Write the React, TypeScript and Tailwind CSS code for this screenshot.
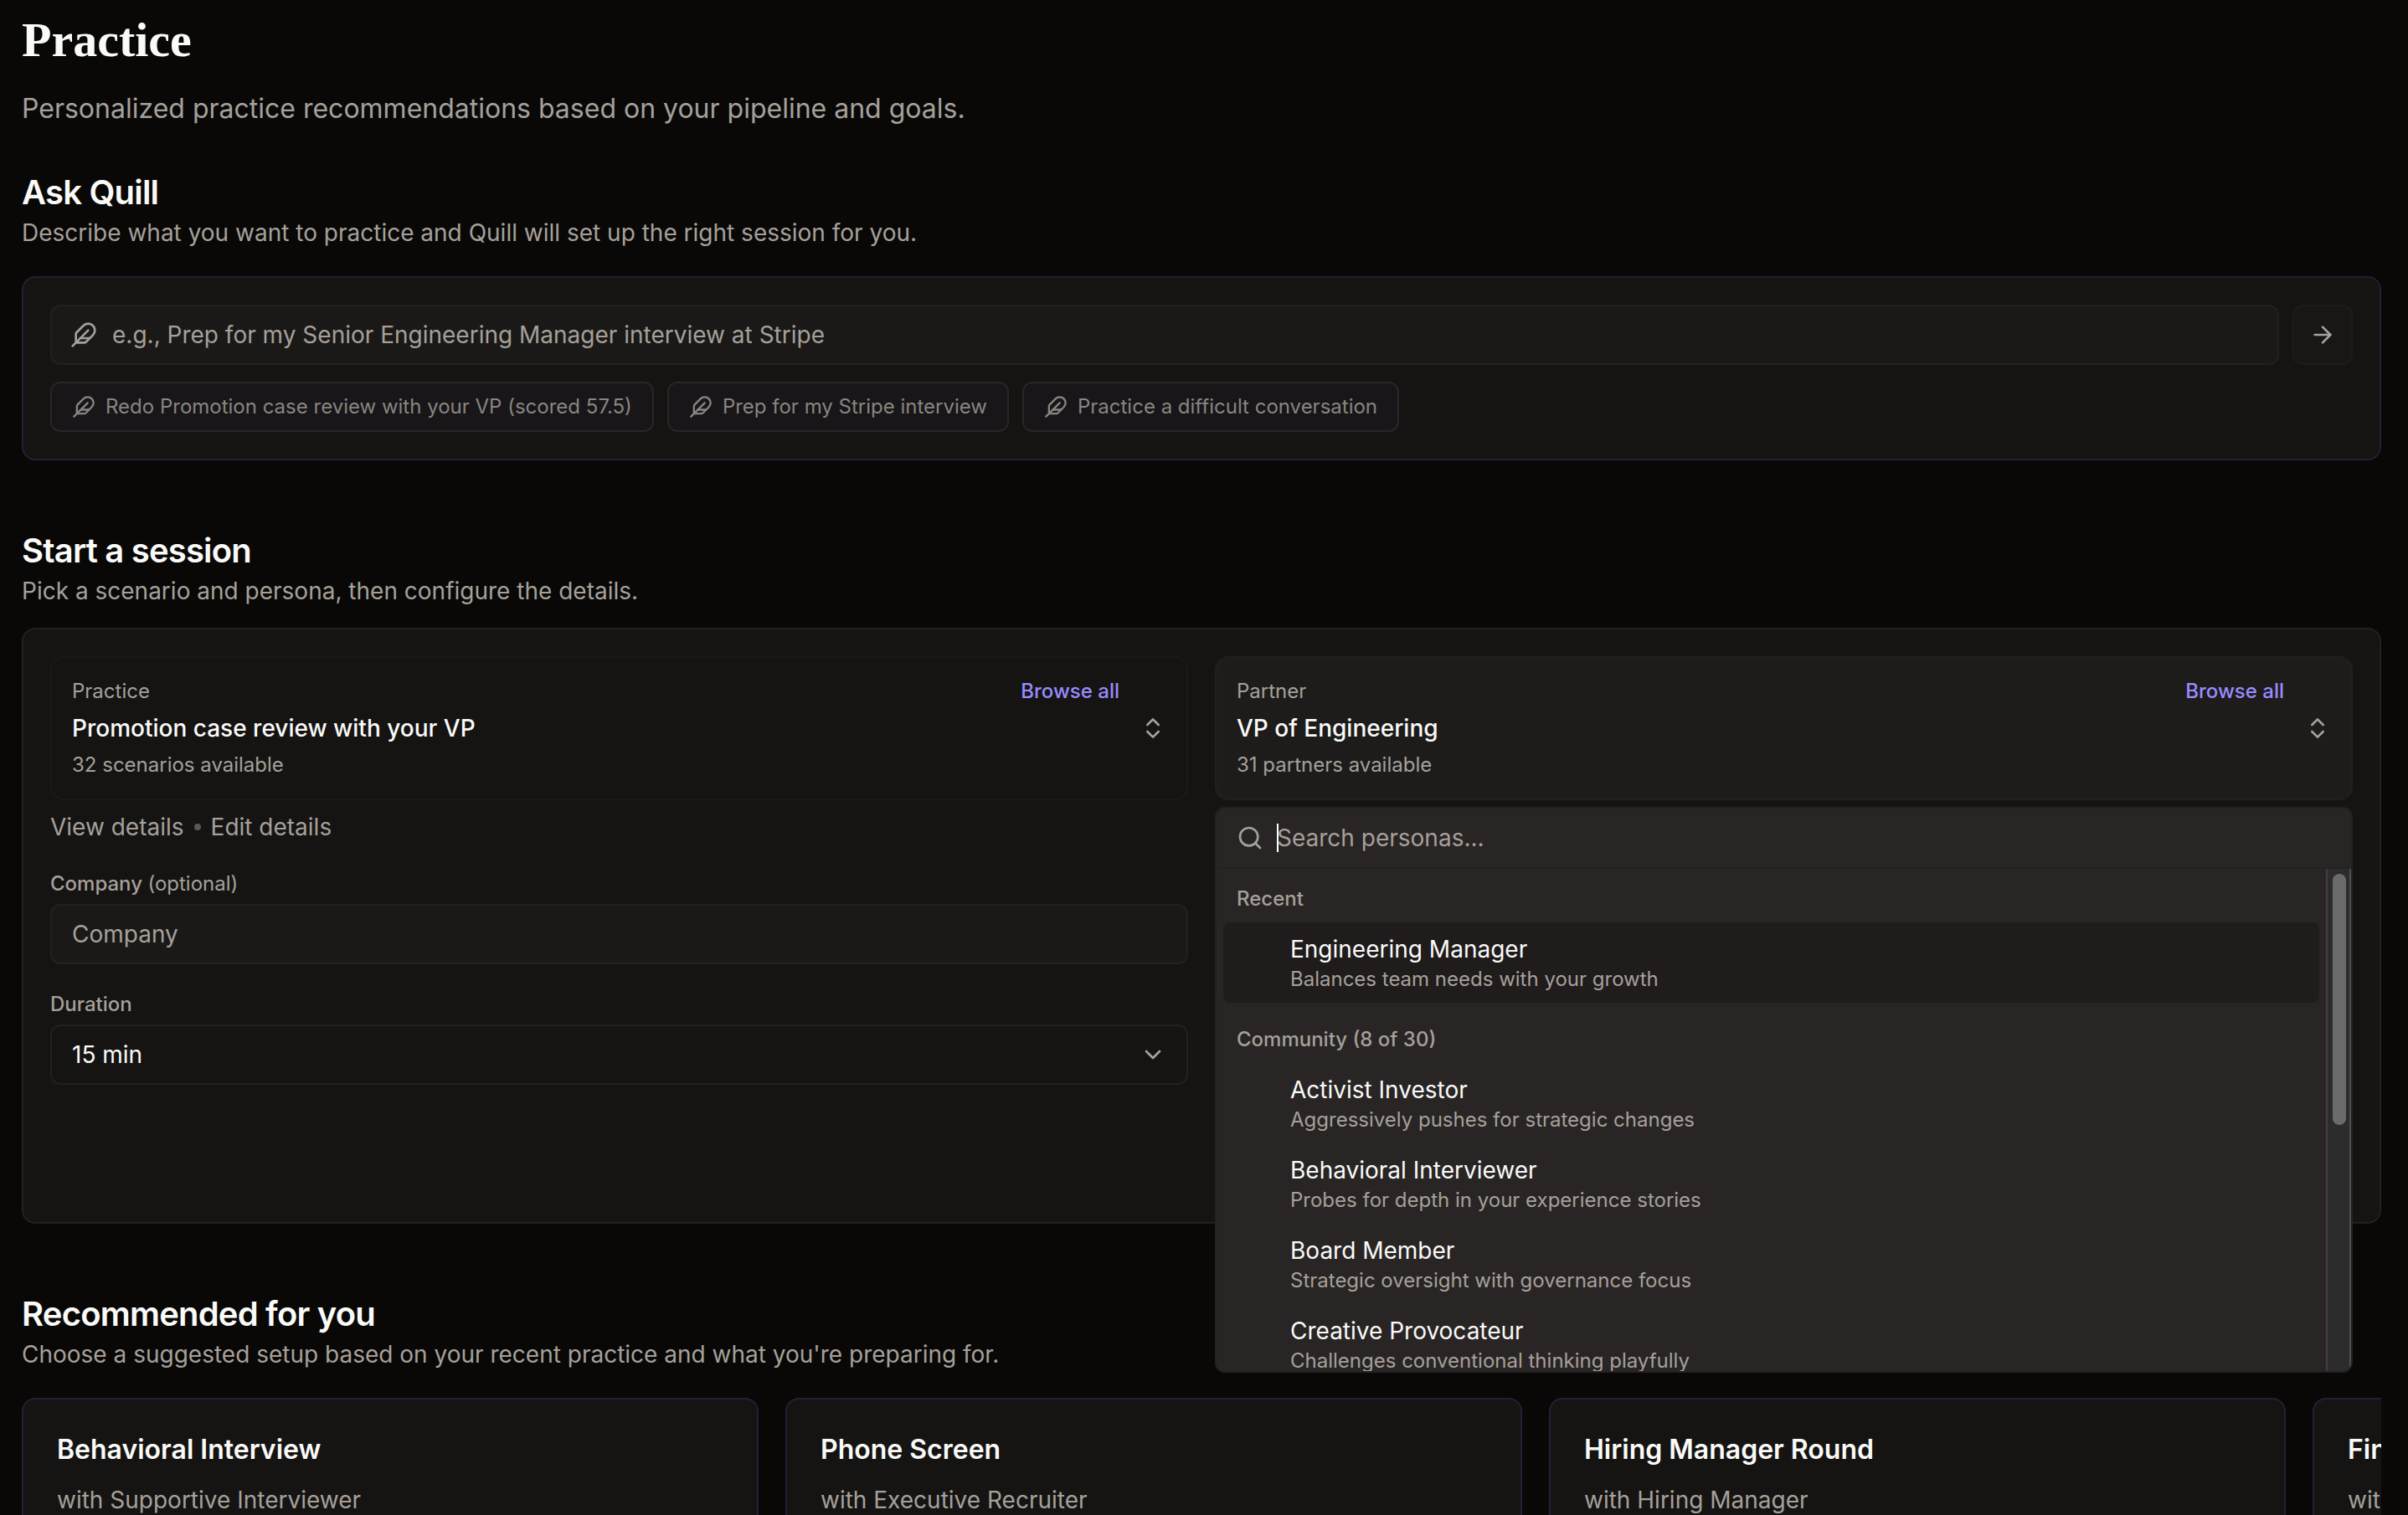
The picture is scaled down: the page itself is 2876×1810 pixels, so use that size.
import { ArrowRight, ChevronDown, ChevronsUpDown, Feather, Search } from "lucide-react";

const suggestions = [
  "Redo Promotion case review with your VP (scored 57.5)",
  "Prep for my Stripe interview",
  "Practice a difficult conversation",
];

const personaGroups = [
  {
    label: "Recent",
    items: [
      { name: "Engineering Manager", description: "Balances team needs with your growth", active: true },
    ],
  },
  {
    label: "Community (8 of 30)",
    items: [
      { name: "Activist Investor", description: "Aggressively pushes for strategic changes", active: false },
      { name: "Behavioral Interviewer", description: "Probes for depth in your experience stories", active: false },
      { name: "Board Member", description: "Strategic oversight with governance focus", active: false },
      { name: "Creative Provocateur", description: "Challenges conventional thinking playfully", active: false },
    ],
  },
];

const recommendations = [
  { title: "Behavioral Interview", persona: "with Supportive Interviewer" },
  { title: "Phone Screen", persona: "with Executive Recruiter" },
  { title: "Hiring Manager Round", persona: "with Hiring Manager" },
  { title: "Final Round", persona: "with Hiring Manager" },
];

const SectionHeading = ({ title, description }: { title: string; description: string }) => (
  <div>
    <h2 className="text-[40px] leading-[56px] font-semibold tracking-[-0.02em] text-stone-50">{title}</h2>
    <p className="text-[28px] leading-10 text-stone-400">{description}</p>
  </div>
);

type PickerProps = {
  label: string;
  value: string;
  hint: string;
  open?: boolean;
};

const Picker = ({ label, value, hint, open = false }: PickerProps) => (
  <div
    className={`flex items-center gap-6 rounded-2xl border-2 p-6 ${
      open ? "border-[#20201e] bg-[#1d1c1a]" : "border-[#1b1a18]"
    }`}
  >
    <div className="min-w-0 flex-1">
      <div className="flex items-center justify-between text-2xl leading-8">
        <span className="text-stone-400">{label}</span>
        <a href="#browse" className="font-medium text-[#988cff]">
          Browse all
        </a>
      </div>
      <p className="mt-2 truncate text-[28px] leading-10 font-medium text-stone-50">{value}</p>
      <p className="mt-2 text-2xl leading-8 text-stone-400">{hint}</p>
    </div>
    <button type="button" aria-label={`Change ${label}`} aria-expanded={open}>
      <ChevronsUpDown className="size-8 text-stone-400" />
    </button>
  </div>
);

const PersonaMenu = () => (
  <div className="absolute inset-x-0 top-full z-10 mt-2 overflow-hidden rounded-xl border-2 border-[#232220] bg-[#292524]">
    <div className="flex h-[72px] items-center gap-4 border-b-2 border-[#232220] px-6">
      <Search className="size-8 shrink-0 text-[#a3a19e]" />
      <div className="relative flex flex-1 items-center">
        <input
          type="text"
          aria-label="Search personas"
          placeholder="Search personas..."
          className="w-full bg-transparent text-[28px] leading-10 text-stone-50 caret-transparent outline-none placeholder:text-stone-400"
        />
        <span className="absolute left-0 h-[34px] w-0.5 bg-white" />
      </div>
    </div>

    <div className="flex h-[600px]">
      <div className="min-w-0 flex-1 overflow-hidden">
        {personaGroups.map((group) => (
          <div key={group.label} className="p-2">
            <p className="px-4 py-3 text-2xl leading-8 font-medium text-stone-400">{group.label}</p>
            {group.items.map((item) => (
              <button
                key={item.name}
                type="button"
                className={`block w-full rounded-lg py-3 pr-4 pl-20 text-left ${item.active ? "bg-[#1f1c1b]" : ""}`}
              >
                <span className="block text-[28px] leading-10 text-stone-50">{item.name}</span>
                <span className="block text-2xl leading-8 text-stone-400">{item.description}</span>
              </button>
            ))}
          </div>
        ))}
      </div>

      {/* scrollbar */}
      <div className="w-[30px] shrink-0 border-r-2 border-l-2 border-r-[#4f4f4f] border-l-[#3e3e3e] bg-[#2c2c2c] pt-1.5 pr-1 pl-1.5">
        <div className="h-[300px] w-4 rounded-full bg-[#6b6b6b]" />
      </div>
    </div>
  </div>
);

export default function App() {
  return (
    <main className="h-screen overflow-hidden bg-[#090806] pt-4 pr-8 pl-[26px] font-['Inter',sans-serif] text-stone-50">
      <header>
        <h1 className="font-['Liberation_Serif',serif] text-[58px] leading-[64px] font-bold">Practice</h1>
        <p className="mt-[26px] text-[32px] leading-[48px] text-stone-400">
          Personalized practice recommendations based on your pipeline and goals.
        </p>
      </header>

      <section className="mt-12">
        <SectionHeading
          title="Ask Quill"
          description="Describe what you want to practice and Quill will set up the right session for you."
        />
        <div className="mt-8 rounded-2xl border-2 border-[#241f3a] bg-[#151412] p-8">
          <form className="flex gap-4">
            <div className="flex h-[72px] flex-1 items-center gap-[18px] rounded-xl border-2 border-[#22211f] bg-[#1a1917] px-[22px]">
              <Feather className="size-8 shrink-0 text-stone-400" />
              <input
                type="text"
                aria-label="Describe your practice session"
                placeholder="e.g., Prep for my Senior Engineering Manager interview at Stripe"
                className="w-full bg-transparent text-[28px] leading-10 text-stone-50 outline-none placeholder:text-stone-400"
              />
            </div>
            <button
              type="button"
              aria-label="Start"
              className="flex size-[72px] items-center justify-center rounded-xl border-2 border-[#1d1c1a] bg-[#181715]"
            >
              <ArrowRight className="size-8 text-[#a3a2a1]" />
            </button>
          </form>
          <div className="mt-5 flex flex-wrap gap-4">
            {suggestions.map((text) => (
              <button
                key={text}
                type="button"
                className="flex h-[60px] items-center gap-3 rounded-xl border-2 border-[#282725] bg-[#181618] px-6 text-2xl leading-8 text-[#8a8581]"
              >
                <Feather className="size-7" />
                {text}
              </button>
            ))}
          </div>
        </div>
      </section>

      <section className="mt-20">
        <SectionHeading
          title="Start a session"
          description="Pick a scenario and persona, then configure the details."
        />
        <div className="mt-6 grid min-h-[712px] grid-cols-2 items-start gap-8 rounded-2xl border-2 border-[#22211f] bg-[#151412] p-8">
          <div>
            <Picker label="Practice" value="Promotion case review with your VP" hint="32 scenarios available" />
            <div className="mt-3 flex items-center gap-3 text-[28px] leading-10 text-stone-400">
              <a href="#view">View details</a>
              <span className="size-2 rounded-full bg-[#5c5855]" />
              <a href="#edit">Edit details</a>
            </div>

            <label htmlFor="company" className="mt-8 block text-2xl leading-8 font-medium text-stone-400">
              Company <span className="font-normal">(optional)</span>
            </label>
            <input
              id="company"
              type="text"
              placeholder="Company"
              className="mt-2 h-[72px] w-full rounded-xl border-2 border-[#22211f] bg-[#1a1917] px-6 text-[28px] leading-10 outline-none placeholder:text-stone-400"
            />

            <label htmlFor="duration" className="mt-8 block text-2xl leading-8 font-medium text-stone-400">
              Duration
            </label>
            <div className="relative mt-2">
              <select
                id="duration"
                className="h-[72px] w-full appearance-none rounded-xl border-2 border-[#22211f] bg-[#151412] px-6 text-[28px] leading-10 outline-none"
              >
                <option>15 min</option>
              </select>
              <ChevronDown className="pointer-events-none absolute inset-y-0 right-[26px] my-auto size-8 text-stone-400" />
            </div>
          </div>

          <div className="relative">
            <Picker label="Partner" value="VP of Engineering" hint="31 partners available" open />
            <PersonaMenu />
          </div>
        </div>
      </section>

      <section className="mt-20">
        <SectionHeading
          title="Recommended for you"
          description="Choose a suggested setup based on your recent practice and what you're preparing for."
        />
        <div className="mt-8 flex gap-8 overflow-hidden">
          {recommendations.map((item) => (
            <article
              key={item.title}
              className="w-[880px] shrink-0 rounded-2xl border-2 border-[#241f3a] bg-[#151412] p-10"
            >
              <h3 className="text-[32px] leading-10 font-semibold">{item.title}</h3>
              <p className="mt-5 text-[28px] leading-10 text-stone-400">{item.persona}</p>
            </article>
          ))}
        </div>
      </section>
    </main>
  );
}
